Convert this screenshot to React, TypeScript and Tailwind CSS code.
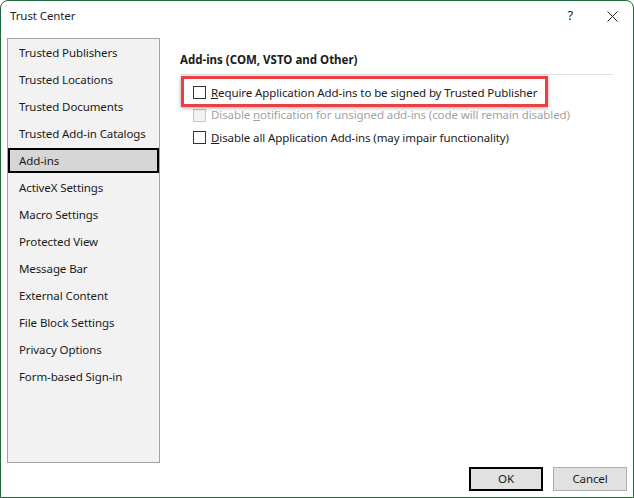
const navItems = [
  'Trusted Publishers',
  'Trusted Locations',
  'Trusted Documents',
  'Trusted Add-in Catalogs',
  'Add-ins',
  'ActiveX Settings',
  'Macro Settings',
  'Protected View',
  'Message Bar',
  'External Content',
  'File Block Settings',
  'Privacy Options',
  'Form-based Sign-in',
];

const font = { fontFamily: '"Noto Sans", "Segoe UI", sans-serif' };

function Checkbox({ disabled }: { disabled?: boolean }) {
  return (
    <span
      className={`block w-[13px] h-[13px] shrink-0 border ${
        disabled ? 'border-[#c6c6c6] bg-[#f3f3f3]' : 'border-[#333333] bg-white'
      }`}
    />
  );
}

export default function App() {
  const active = 'Add-ins';

  return (
    <div
      className="w-[634px] h-[498px] bg-white border border-[#1d6b3d] rounded-t-[8px] overflow-hidden flex flex-col text-[11.5px] tracking-[-0.1px] text-[#1a1a1a]"
      style={font}
    >
      {/* title bar */}
      <div className="h-[37px] shrink-0">
        <div className="h-[30px] flex items-center pl-[9px] pr-[10px]">
          <span className="text-[#1f1f1f]">Trust Center</span>
          <span className="ml-auto mr-[34px] text-[13px] text-[#222]">?</span>
          <svg width="11" height="11" viewBox="0 0 11 11" className="mr-[5px]">
            <path d="M0.5 0.5 L10.5 10.5 M10.5 0.5 L0.5 10.5" stroke="#222" strokeWidth="1" />
          </svg>
        </div>
      </div>

      {/* body */}
      <div className="h-[425px] shrink-0 flex">
        <div className="ml-[6px] w-[153px] h-full border border-[#a3a3a3] bg-[#f2f2f2]">
          {navItems.map((item) =>
            item === active ? (
              <div key={item} className="h-[27px] py-px">
                <div className="h-[25px] border-2 border-black bg-[#d6d6d6] pl-[9px] flex items-center">
                  {item}
                </div>
              </div>
            ) : (
              <div key={item} className="h-[27px] pl-[11px] flex items-center">
                {item}
              </div>
            )
          )}
        </div>

        <div className="flex-1 pl-[20px] pr-[20px] pt-[14px]">
          <div className="h-[24px] flex flex-col">
            <div className="font-bold leading-4 tracking-normal text-[#1a1a1a]">Add-ins (COM, VSTO and Other)</div>
            <div className="mt-auto mb-px h-px bg-[#e3e3e3]" />
          </div>

          <div className="relative mt-[5px] pl-[13px]">
            <div className="h-[23px] flex items-center gap-[5px]">
              <Checkbox />
              <span>
                <span className="underline">R</span>equire Application Add-ins to be signed by Trusted Publisher
              </span>
            </div>
            <div className="h-[22px] flex items-center gap-[5px] text-[#a2a2a2]">
              <Checkbox disabled />
              <span>
                Disable <span className="underline">n</span>otification for unsigned add-ins (code will remain disabled)
              </span>
            </div>
            <div className="h-[23px] flex items-center gap-[5px]">
              <Checkbox />
              <span>
                <span className="underline">D</span>isable all Application Add-ins (may impair functionality)
              </span>
            </div>

            {/* annotation box */}
            <div className="absolute left-px top-[-5px] w-[367px] h-[31px] border-[3px] border-[#ec3f42] shadow-[0_1px_4px_rgba(0,0,0,0.35)]" />
          </div>
        </div>
      </div>

      {/* footer */}
      <div className="flex-1 flex justify-end items-start pt-[4px] pr-[6px] gap-[10px]">
        <button className="w-[74px] h-[24px] border-2 border-black bg-[#e1e1e1]">OK</button>
        <button className="w-[74px] h-[24px] border border-[#adadad] bg-[#e1e1e1]">Cancel</button>
      </div>
    </div>
  );
}
